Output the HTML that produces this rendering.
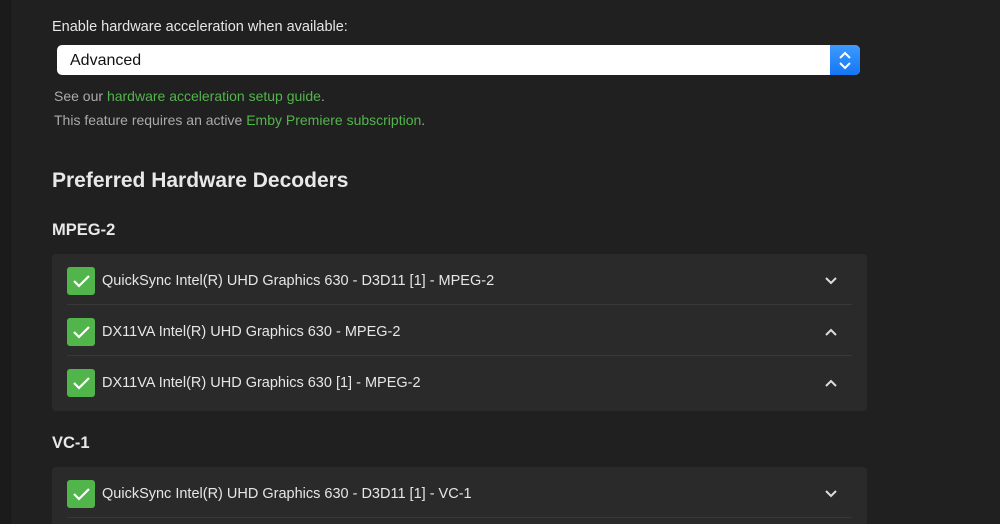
<!DOCTYPE html><html><head><style>
html,body{margin:0;width:1000px;height:524px;overflow:hidden}
body{background:#202020;font-family:"Liberation Sans",sans-serif;position:relative}
.strip{position:absolute;left:0;top:0;width:10px;height:524px;background:#1b1b1b;border-right:1px solid #181818}
.a{position:absolute;white-space:nowrap}
.lbl{left:52px;top:19px;color:#e6e6e6;font-size:14.5px}
.sel{left:57px;top:45px;width:803px;height:30px;background:#fff;border-radius:5px;overflow:hidden}
.sel span{position:absolute;left:13px;top:7px;font-size:16px;color:#111}
.sel .btn{position:absolute;right:0;top:0;width:30px;height:30px;background:linear-gradient(#3d9bff,#1476f5)}
.note{left:54px;color:#aaa;font-size:14px}
.g{color:#52b54b}
h2{position:absolute;left:52px;top:169px;margin:0;color:#e8e8e8;font-size:21px;font-weight:bold}
h3{position:absolute;left:52px;margin:0;color:#e8e8e8;font-size:16.5px;font-weight:bold}
.card{position:absolute;left:52px;width:815px;background:#2a2a2a;border-radius:4px}
.row{position:relative;height:50px;margin:0 15px;border-bottom:1px solid #383838}
.row:last-child{border-bottom:none}
.cb{position:absolute;left:0;top:13px;width:28px;height:28px;background:#52b54b;border-radius:3px}
.row .t{position:absolute;left:35px;top:19px;color:#e6e6e6;font-size:14.5px}
.ch{position:absolute;right:14px;top:20px}
</style></head><body>
<div class="strip"></div>
<div class="a lbl">Enable hardware acceleration when available:</div>
<div class="a sel"><span>Advanced</span><div class="btn"><svg width="30" height="30"><path d="M10 13l5-5 5 5M10 18l5 5 5-5" stroke="#fff" stroke-width="2" fill="none"/></svg></div></div>
<div class="a note" style="top:88px">See our <span class="g">hardware acceleration setup guide</span>.</div>
<div class="a note" style="top:112px">This feature requires an active <span class="g">Emby Premiere subscription</span>.</div>
<h2>Preferred Hardware Decoders</h2>
<h3 style="top:221px">MPEG-2</h3>
<div class="card" style="top:254px;height:157px">
<div class="row"><div class="cb"><svg width="28" height="28"><path d="M7 14l5 5 10-10" stroke="#fff" stroke-width="2.2" fill="none"/></svg></div><div class="t">QuickSync Intel(R) UHD Graphics 630 - D3D11 [1] - MPEG-2</div><svg class="ch" width="14" height="14"><path d="M2 4l5 5 5-5" stroke="#ddd" stroke-width="2" fill="none"/></svg></div>
<div class="row"><div class="cb"><svg width="28" height="28"><path d="M7 14l5 5 10-10" stroke="#fff" stroke-width="2.2" fill="none"/></svg></div><div class="t">DX11VA Intel(R) UHD Graphics 630 - MPEG-2</div><svg class="ch" width="14" height="14"><path d="M2 10l5-5 5 5" stroke="#ddd" stroke-width="2" fill="none"/></svg></div>
<div class="row"><div class="cb"><svg width="28" height="28"><path d="M7 14l5 5 10-10" stroke="#fff" stroke-width="2.2" fill="none"/></svg></div><div class="t">DX11VA Intel(R) UHD Graphics 630 [1] - MPEG-2</div><svg class="ch" width="14" height="14"><path d="M2 10l5-5 5 5" stroke="#ddd" stroke-width="2" fill="none"/></svg></div>
</div>
<h3 style="top:434px">VC-1</h3>
<div class="card" style="top:467px;height:80px">
<div class="row" style="border-bottom:1px solid #383838"><div class="cb"><svg width="28" height="28"><path d="M7 14l5 5 10-10" stroke="#fff" stroke-width="2.2" fill="none"/></svg></div><div class="t">QuickSync Intel(R) UHD Graphics 630 - D3D11 [1] - VC-1</div><svg class="ch" width="14" height="14"><path d="M2 4l5 5 5-5" stroke="#ddd" stroke-width="2" fill="none"/></svg></div>
</div>
</body></html>
